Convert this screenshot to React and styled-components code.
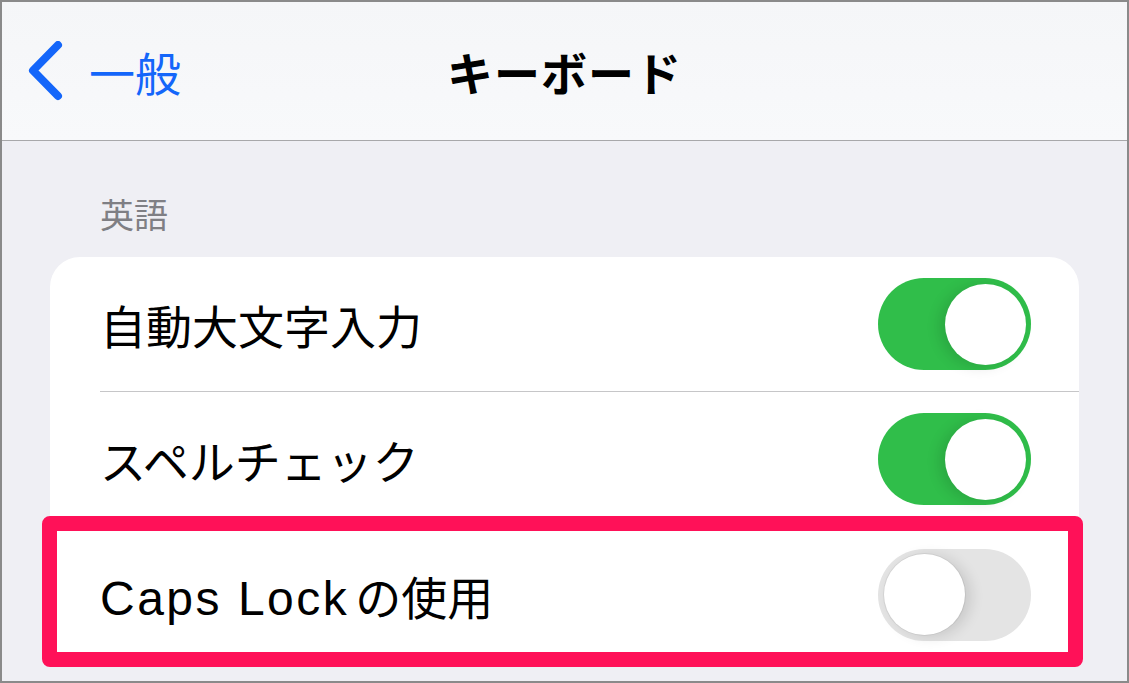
import React from 'react'
import styled, { createGlobalStyle } from 'styled-components'

const GlobalStyle = createGlobalStyle`
  html, body {
    margin: 0;
    padding: 0;
    background: #efeff4;
  }
  body {
    font-family: "Liberation Sans", "Noto Sans CJK JP", sans-serif;
    -webkit-font-smoothing: antialiased;
  }
`

const Frame = styled.div`
  box-sizing: border-box;
  width: 1129px;
  height: 683px;
  border: 2px solid #8a8a8a;
  background: #efeff4;
  overflow: hidden;
  display: flex;
  flex-direction: column;
`

const NavBar = styled.header`
  flex: 0 0 auto;
  height: 138px;
  border-bottom: 1px solid #a8a8aa;
  background: linear-gradient(180deg, #f5f6f8 0%, #f8f9fb 100%);
  display: grid;
  grid-template-columns: 1fr auto 1fr;
  align-items: center;
`

const BackButton = styled.button`
  justify-self: start;
  display: flex;
  align-items: center;
  gap: 22px;
  padding: 0 0 0 25px;
  margin: 0;
  border: 0;
  background: none;
  color: #1466fa;
  font-family: "Noto Sans CJK JP", sans-serif;
  font-size: 46px;
  line-height: 1;
  cursor: pointer;
`

const Title = styled.h1`
  margin: 0;
  font-family: "Noto Sans CJK JP", sans-serif;
  font-weight: 700;
  font-size: 46px;
  color: #000;
  letter-spacing: 1px;
`

const Content = styled.main`
  flex: 1;
  display: flex;
  flex-direction: column;
`

const SectionLabel = styled.div`
  padding: 53px 0 0 98px;
  height: 40px;
  line-height: 40px;
  margin-bottom: 23px;
  color: #7f7f84;
  font-family: "Noto Sans CJK JP", sans-serif;
  font-size: 34px;
`

const CardWrap = styled.div`
  position: relative;
  margin: 0 48px;
`

const Card = styled.div`
  background: #fff;
  border-radius: 30px;
  overflow: hidden;
`

const Row = styled.div`
  padding-left: 50px;
`

const RowBody = styled.div`
  height: 135px;
  display: flex;
  align-items: center;
  justify-content: space-between;
  padding-right: 48px;
  box-sizing: border-box;
  border-bottom: ${p => (p.$last ? 'none' : '1px solid #c6c6c8')};
`

const Label = styled.span`
  font-family: "Noto Sans CJK JP", sans-serif;
  font-size: 46px;
  color: #000;
`

const Latin = styled.span`
  font-family: "Liberation Sans", sans-serif;
  font-size: 48px;
  letter-spacing: 2.5px;
  margin-right: 6px;
`

const Track = styled.span`
  position: relative;
  flex: 0 0 auto;
  width: 153px;
  height: 92px;
  border-radius: 46px;
  background: ${p => (p.$on ? '#30be4a' : '#e4e4e4')};
`

const Knob = styled.span`
  position: absolute;
  top: 5.5px;
  left: ${p => (p.$on ? '66.5px' : '5.5px')};
  width: 81px;
  height: 81px;
  border-radius: 50%;
  background: #fff;
  box-shadow: ${p =>
    p.$on
      ? '-6px 2px 14px rgba(0, 0, 0, 0.12)'
      : '0 0 0 1px rgba(0, 0, 0, 0.06), 6px 2px 14px rgba(0, 0, 0, 0.12)'};
`

const Highlight = styled.div`
  position: absolute;
  left: -8px;
  top: 259px;
  width: 1041px;
  height: 151px;
  box-sizing: border-box;
  border: 15px solid #ff1158;
  border-radius: 8px;
  pointer-events: none;
`

const Toggle = ({ on }) => (
  <Track $on={on}>
    <Knob $on={on} />
  </Track>
)

const Chevron = () => (
  <svg width="40" height="60" viewBox="0 0 40 60">
    <polyline
      points="31,4 6,29.5 31,55"
      fill="none"
      stroke="currentColor"
      strokeWidth="8"
      strokeLinecap="round"
      strokeLinejoin="round"
    />
  </svg>
)

const settings = [
  { label: '自動大文字入力', on: true },
  { label: 'スペルチェック', on: true },
  { latin: 'Caps Lock', label: 'の使用', on: false },
]

export default function App() {
  return (
    <>
      <GlobalStyle />
      <Frame>
        <NavBar>
          <BackButton>
            <Chevron />
            一般
          </BackButton>
          <Title>キーボード</Title>
          <span />
        </NavBar>
        <Content>
          <SectionLabel>英語</SectionLabel>
          <CardWrap>
            <Card>
              {settings.map((s, i) => (
                <Row key={s.label}>
                  <RowBody $last={i === settings.length - 1}>
                    <Label>
                      {s.latin && <Latin>{s.latin}</Latin>}
                      {s.label}
                    </Label>
                    <Toggle on={s.on} />
                  </RowBody>
                </Row>
              ))}
            </Card>
            <Highlight />
          </CardWrap>
        </Content>
      </Frame>
    </>
  )
}
